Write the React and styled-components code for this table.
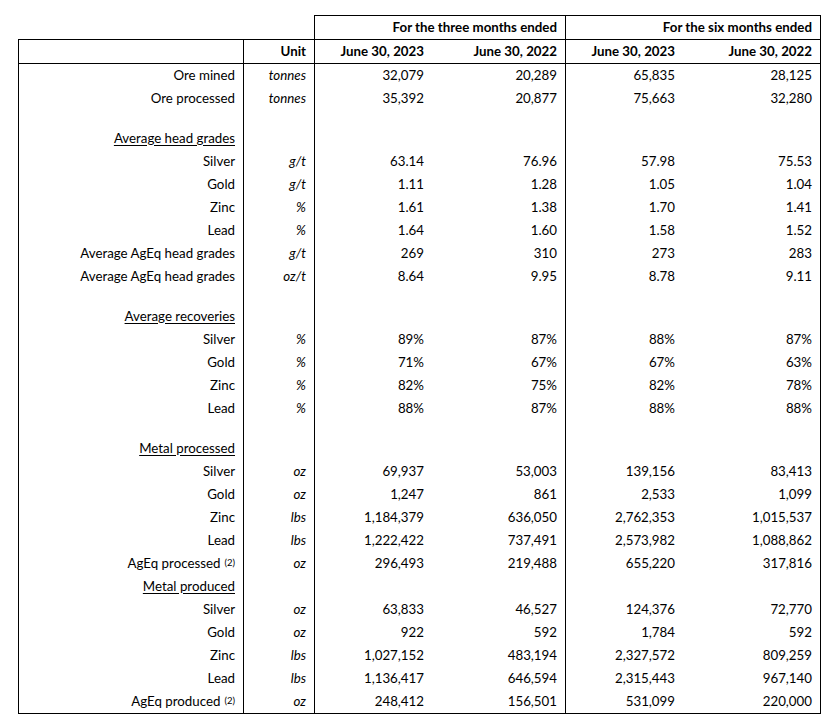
import React from 'react'
import styled, {createGlobalStyle} from 'styled-components'

const GlobalStyle = createGlobalStyle`
  body {
    margin: 0;
    background: #fff;
    color: #000;
    font-family: Lato, 'Open Sans', Arial, sans-serif;
    font-size: 13.3px;
  }
`

const COLS = '226px 71px 117px 134px 117px 138px'

const Sheet = styled.div`
  width: 803px;
  margin: 15px 0 0 18px;
`

const GroupRow = styled.div`
  display: grid;
  grid-template-columns: 296px 252px 255px;
  height: 24px;
`

const GroupCell = styled.div`
  box-sizing: border-box;
  display: flex;
  align-items: center;
  justify-content: flex-end;
  padding: 0 8px 1px 0;
  font-weight: 700;
  border-top: 1px solid #000;
  border-right: 1px solid #000;
  border-left: ${p => (p.$first ? '1px solid #000' : 'none')};
`

const Row = styled.div`
  display: grid;
  grid-template-columns: ${COLS};
  height: ${p => (p.$blank ? 17 : 23)}px;
`

const HeadRow = styled(Row)`
  height: 23px;
  border-top: 1px solid #000;
  border-bottom: 1px solid #000;
  font-weight: 700;
`

const Body = styled.div`
  border-bottom: 1px solid #000;
`

const Cell = styled.div`
  box-sizing: border-box;
  display: flex;
  align-items: center;
  justify-content: flex-end;
  padding: 0 8px 2px 0;
  white-space: nowrap;
  border-left: ${p => (p.$left ? '1px solid #000' : 'none')};
  border-right: ${p => (p.$right ? '1px solid #000' : 'none')};
  font-style: ${p => (p.$italic ? 'italic' : 'normal')};
`

const Title = styled.span`
  text-decoration: underline;
  text-underline-offset: 2px;
`

const Sup = styled.sup`
  font-size: 9.5px;
  margin-left: 4px;
  vertical-align: 6px;
  line-height: 0;
`

const rows = [
  {label: 'Ore mined', unit: 'tonnes', v: ['32,079', '20,289', '65,835', '28,125']},
  {label: 'Ore processed', unit: 'tonnes', v: ['35,392', '20,877', '75,663', '32,280']},
  {blank: true},
  {title: 'Average head grades'},
  {label: 'Silver', unit: 'g/t', v: ['63.14', '76.96', '57.98', '75.53']},
  {label: 'Gold', unit: 'g/t', v: ['1.11', '1.28', '1.05', '1.04']},
  {label: 'Zinc', unit: '%', v: ['1.61', '1.38', '1.70', '1.41']},
  {label: 'Lead', unit: '%', v: ['1.64', '1.60', '1.58', '1.52']},
  {label: 'Average AgEq head grades', unit: 'g/t', v: ['269', '310', '273', '283']},
  {label: 'Average AgEq head grades', unit: 'oz/t', v: ['8.64', '9.95', '8.78', '9.11']},
  {blank: true},
  {title: 'Average recoveries'},
  {label: 'Silver', unit: '%', v: ['89%', '87%', '88%', '87%']},
  {label: 'Gold', unit: '%', v: ['71%', '67%', '67%', '63%']},
  {label: 'Zinc', unit: '%', v: ['82%', '75%', '82%', '78%']},
  {label: 'Lead', unit: '%', v: ['88%', '87%', '88%', '88%']},
  {blank: true},
  {title: 'Metal processed'},
  {label: 'Silver', unit: 'oz', v: ['69,937', '53,003', '139,156', '83,413']},
  {label: 'Gold', unit: 'oz', v: ['1,247', '861', '2,533', '1,099']},
  {label: 'Zinc', unit: 'lbs', v: ['1,184,379', '636,050', '2,762,353', '1,015,537']},
  {label: 'Lead', unit: 'lbs', v: ['1,222,422', '737,491', '2,573,982', '1,088,862']},
  {label: 'AgEq processed', sup: '(2)', unit: 'oz', v: ['296,493', '219,488', '655,220', '317,816']},
  {title: 'Metal produced'},
  {label: 'Silver', unit: 'oz', v: ['63,833', '46,527', '124,376', '72,770']},
  {label: 'Gold', unit: 'oz', v: ['922', '592', '1,784', '592']},
  {label: 'Zinc', unit: 'lbs', v: ['1,027,152', '483,194', '2,327,572', '809,259']},
  {label: 'Lead', unit: 'lbs', v: ['1,136,417', '646,594', '2,315,443', '967,140']},
  {label: 'AgEq produced', sup: '(2)', unit: 'oz', v: ['248,412', '156,501', '531,099', '220,000']}
]

// columns 2 and 4 close a period group, so they carry the divider
const DataRow = ({row}) => {
  const v = row.v || ['', '', '', '']
  return (
    <Row $blank={row.blank}>
      <Cell $left $right>
        {row.title ? <Title>{row.title}</Title> : row.label}
        {row.sup && <Sup>{row.sup}</Sup>}
      </Cell>
      <Cell $right $italic>{row.unit}</Cell>
      <Cell>{v[0]}</Cell>
      <Cell $right>{v[1]}</Cell>
      <Cell>{v[2]}</Cell>
      <Cell $right>{v[3]}</Cell>
    </Row>
  )
}

const App = () => (
  <>
    <GlobalStyle />
    <Sheet>
      <GroupRow>
        <div />
        <GroupCell $first>For the three months ended</GroupCell>
        <GroupCell>For the six months ended</GroupCell>
      </GroupRow>
      <HeadRow>
        <Cell $left $right />
        <Cell $right>Unit</Cell>
        <Cell>June 30, 2023</Cell>
        <Cell $right>June 30, 2022</Cell>
        <Cell>June 30, 2023</Cell>
        <Cell $right>June 30, 2022</Cell>
      </HeadRow>
      <Body>
        {rows.map((row, i) => (
          <DataRow key={i} row={row} />
        ))}
      </Body>
    </Sheet>
  </>
)

export default App
